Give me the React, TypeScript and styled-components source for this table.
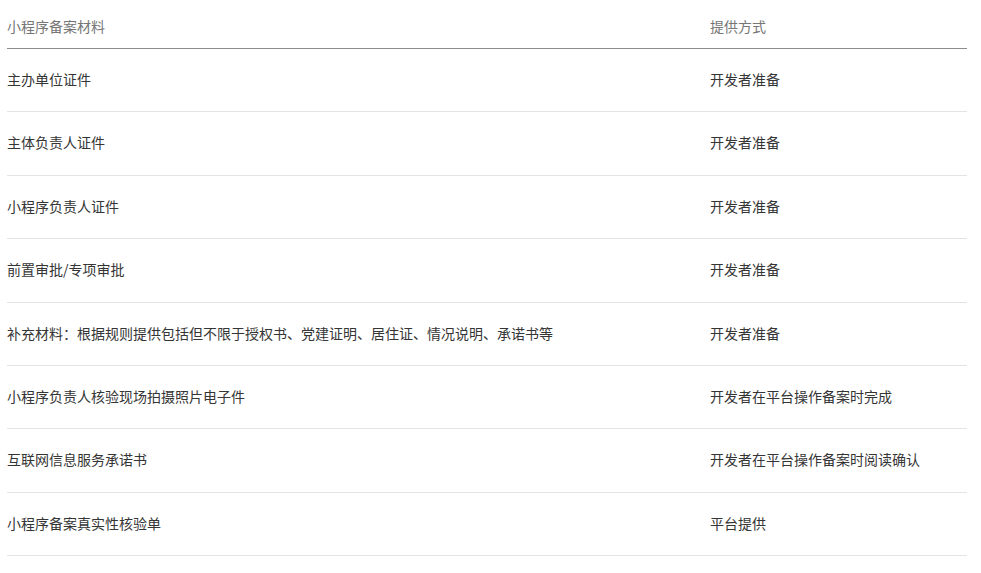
import styled, { createGlobalStyle } from 'styled-components'

const GlobalStyle = createGlobalStyle`
    body {
        margin: 0;
        background: #ffffff;
        font-family: "Noto Sans CJK SC", "Noto Sans", sans-serif;
    }
`

const Pagina = styled.div`
    padding: 6px 14px 0 7px;
`

const Tabela = styled.table`
    width: 960px;
    border-collapse: collapse;
    font-size: 14px;
    line-height: 22.4px;
    table-layout: fixed;
`

const Cabecalho = styled.th<{ $largura?: string }>`
    text-align: left;
    font-weight: normal;
    color: #767676;
    padding: 9px 0 10.6px;
    border-bottom: 1px solid #8c8c8c;
    width: ${p => p.$largura || 'auto'};
`

const Celula = styled.td`
    color: #353535;
    padding: 19px 0 21px;
    border-bottom: 1px solid #e4e4e4;
    white-space: nowrap;
`

const linhas: [string, string][] = [
    ['主办单位证件', '开发者准备'],
    ['主体负责人证件', '开发者准备'],
    ['小程序负责人证件', '开发者准备'],
    ['前置审批/专项审批', '开发者准备'],
    ['补充材料：根据规则提供包括但不限于授权书、党建证明、居住证、情况说明、承诺书等', '开发者准备'],
    ['小程序负责人核验现场拍摄照片电子件', '开发者在平台操作备案时完成'],
    ['互联网信息服务承诺书', '开发者在平台操作备案时阅读确认'],
    ['小程序备案真实性核验单', '平台提供'],
]

export default function App() {
    return (<Pagina>
        <GlobalStyle />
        <Tabela>
            <thead>
                <tr>
                    <Cabecalho $largura="703px">小程序备案材料</Cabecalho>
                    <Cabecalho>提供方式</Cabecalho>
                </tr>
            </thead>
            <tbody>
                {linhas.map(([material, forma]) => (
                    <tr key={material}>
                        <Celula>{material}</Celula>
                        <Celula>{forma}</Celula>
                    </tr>
                ))}
            </tbody>
        </Tabela>
    </Pagina>)
}
